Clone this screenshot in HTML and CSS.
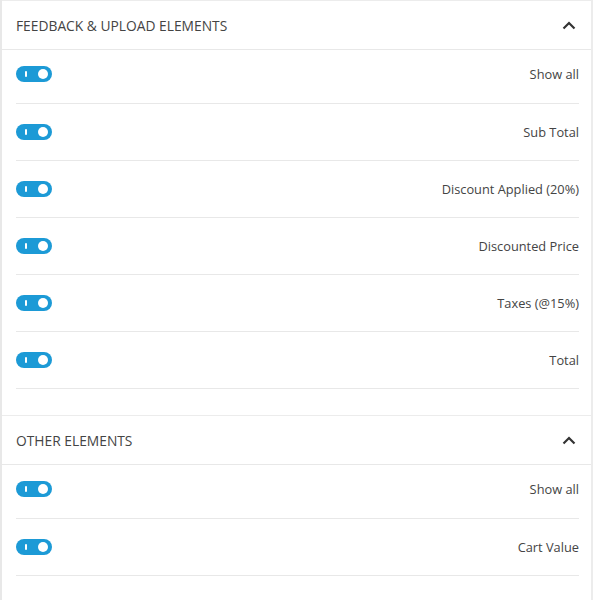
FILE: index.html
```html
<!DOCTYPE html>
<html>
<head>
<meta charset="utf-8">
<link rel="stylesheet" href="styles.css">
</head>
<body>
<div class="panel">
  <section class="section">
    <div class="head">
      <span class="title">FEEDBACK &amp; UPLOAD ELEMENTS</span>
      <svg class="chev" width="14" height="9" viewBox="0 0 14 9"><path d="M1.5 7.5 L7 2 L12.5 7.5" fill="none" stroke="#333" stroke-width="2.2"/></svg>
    </div>
    <div class="rows">
      <div class="row"><span class="toggle"></span><span class="label">Show all</span></div>
      <div class="row"><span class="toggle"></span><span class="label">Sub Total</span></div>
      <div class="row"><span class="toggle"></span><span class="label">Discount Applied (20%)</span></div>
      <div class="row"><span class="toggle"></span><span class="label">Discounted Price</span></div>
      <div class="row"><span class="toggle"></span><span class="label">Taxes (@15%)</span></div>
      <div class="row"><span class="toggle"></span><span class="label">Total</span></div>
    </div>
  </section>
  <section class="section">
    <div class="head">
      <span class="title">OTHER ELEMENTS</span>
      <svg class="chev" width="14" height="9" viewBox="0 0 14 9"><path d="M1.5 7.5 L7 2 L12.5 7.5" fill="none" stroke="#333" stroke-width="2.2"/></svg>
    </div>
    <div class="rows">
      <div class="row"><span class="toggle"></span><span class="label">Show all</span></div>
      <div class="row"><span class="toggle"></span><span class="label">Cart Value</span></div>
    </div>
  </section>
</div>
</body>
</html>
```

FILE: styles.css
```css
* { box-sizing: border-box; }
html, body { margin: 0; padding: 0; background: #fff; }
body { font-family: "Open Sans", "Noto Sans", sans-serif; color: #444; }
.panel {
  width: 593px;
  min-height: 600px;
  border-left: 2px solid #e8e8e8;
  border-right: 2px solid #ececec;
}
.section { border-top: 1px solid #ececec; }
.head {
  height: 49px;
  border-bottom: 1px solid #e8e8e8;
  display: flex;
  align-items: center;
  justify-content: space-between;
  padding: 0 15px 0 14px;
}
.title {
  font-size: 13.8px;
  color: #444;
}
.chev { display: block; }
.rows { padding: 0 12px 26px 14px; }
.row {
  height: 57px;
  border-bottom: 1px solid #e8e8e8;
  display: flex;
  align-items: center;
  justify-content: space-between;
}
.row:first-child { height: 54px; padding-bottom: 5px; }
.label { font-size: 12.8px; color: #444; }
.toggle {
  position: relative;
  width: 36px;
  height: 16px;
  border-radius: 8px;
  background: #1c9ad6;
}
.toggle::before {
  content: "";
  position: absolute;
  left: 9px;
  top: 5px;
  width: 2px;
  height: 6px;
  background: #fff;
  border-radius: 1px;
}
.toggle::after {
  content: "";
  position: absolute;
  right: 4px;
  top: 3px;
  width: 10px;
  height: 10px;
  border-radius: 50%;
  background: #fff;
}
```
